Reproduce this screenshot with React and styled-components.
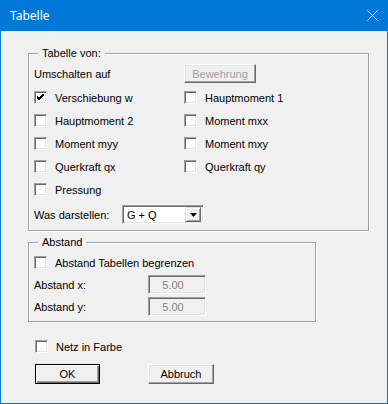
import React from 'react';
import styled, { createGlobalStyle } from 'styled-components';

const GlobalStyle = createGlobalStyle`
  html, body {
    margin: 0;
    padding: 0;
    background: #f0f0f0;
  }
  body {
    font-family: 'Liberation Sans', Arial, sans-serif;
    font-size: 11px;
    color: #000;
  }
`;

const Window = styled.div`
  width: 388px;
  height: 404px;
  box-sizing: border-box;
  border: 1px solid #0078d7;
  border-top: 0;
  background: #f0f0f0;
  display: flex;
  flex-direction: column;
`;

const TitleBar = styled.div`
  height: 31px;
  flex: none;
  margin: 0 -1px;
  background: #0078d7;
  color: #fff;
  display: flex;
  align-items: center;
  justify-content: space-between;
  padding: 0 10px 0 10px;
  font-family: 'Noto Sans', 'Open Sans', sans-serif;
  font-size: 12px;
`;

const Body = styled.div`
  display: flex;
  flex-direction: column;
  padding: 16px 0 0 27px;
`;

const Group = styled.fieldset`
  margin: ${(p) => p.$mt || 0}px 0 0 0;
  padding: 0 5px ${(p) => p.$pb || 6}px 5px;
  width: ${(p) => p.$w}px;
  box-sizing: border-box;
  border: 1px solid #a0a0a0;
  box-shadow: inset 1px 1px 0 #fff, 1px 1px 0 #fff;
  min-width: 0;
`;

const Legend = styled.legend`
  margin-left: 4px;
  padding: 0 4px;
  line-height: 13px;
  height: 13px;
  font-size: 11px;
`;

const Grid = styled.div`
  display: grid;
  grid-template-columns: 150px 1fr;
  padding-top: 4px;
`;

const Row = styled.div`
  display: flex;
  align-items: center;
  height: ${(p) => p.$h || 23}px;
  margin-top: ${(p) => p.$mt || 0}px;
  grid-column: ${(p) => (p.$span ? '1 / -1' : 'auto')};
`;

const Label = styled.span`
  width: ${(p) => (p.$w ? `${p.$w}px` : 'auto')};
  flex: none;
  white-space: nowrap;
`;

const Box = styled.span`
  width: 13px;
  height: 13px;
  box-sizing: border-box;
  flex: none;
  background: #fff;
  border: 1px solid;
  border-color: #a0a0a0 #fff #fff #a0a0a0;
  box-shadow: inset 1px 1px 0 #696969, inset -1px -1px 0 #e3e3e3;
  display: flex;
  align-items: center;
  justify-content: center;
  margin-right: 8px;
`;

const Button = styled.button`
  width: ${(p) => p.$w}px;
  height: ${(p) => p.$h || 19}px;
  box-sizing: border-box;
  padding: 0;
  font-family: inherit;
  font-size: 11px;
  background: #f0f0f0;
  color: ${(p) => (p.disabled ? '#a0a0a0' : '#000')};
  border: 1px solid;
  border-color: ${(p) => (p.$default ? '#000' : '#fff #696969 #696969 #fff')};
  box-shadow: ${(p) =>
    p.$default
      ? 'inset 1px 1px 0 #fff, inset -1px -1px 0 #696969, inset -2px -2px 0 #a0a0a0'
      : 'inset -1px -1px 0 #a0a0a0, inset 1px 1px 0 #e3e3e3'};
`;

const Sunken = styled.div`
  height: 19px;
  width: ${(p) => p.$w}px;
  box-sizing: border-box;
  border: 1px solid;
  border-color: #a0a0a0 #fff #fff #a0a0a0;
  box-shadow: inset 1px 1px 0 #696969, inset -1px -1px 0 #e3e3e3;
  background: ${(p) => (p.$disabled ? '#f0f0f0' : '#fff')};
  color: ${(p) => (p.$disabled ? '#808080' : '#000')};
  display: flex;
  align-items: center;
`;

const InputText = styled.span`
  flex: 1;
  text-align: center;
  padding-right: 8px;
`;

const ComboText = styled.span`
  flex: 1;
  padding-left: 4px;
`;

const ArrowBtn = styled.span`
  width: 16px;
  height: 15px;
  margin-right: 2px;
  box-sizing: border-box;
  background: #f0f0f0;
  border: 1px solid;
  border-color: #e3e3e3 #696969 #696969 #e3e3e3;
  box-shadow: inset 1px 1px 0 #fff, inset -1px -1px 0 #a0a0a0;
  display: flex;
  align-items: center;
  justify-content: center;
`;

const Footer = styled.div`
  display: flex;
  flex-direction: column;
  padding-left: 7px;
`;

const ButtonRow = styled.div`
  display: flex;
  gap: 48px;
  margin-top: 6px;
`;

const Check = ({ label, checked }) => (
  <>
    <Box>
      {checked && (
        <svg width="7" height="7" viewBox="0 0 7 7">
          <path d="M0 3 L2 5 L7 0 M0 4 L2 6 L7 1 M0 2 L2 4 L7 -1" stroke="#000" strokeWidth="1" fill="none" />
        </svg>
      )}
    </Box>
    <Label>{label}</Label>
  </>
);

const CheckRow = ({ label, checked, ...rest }) => (
  <Row {...rest}>
    <Check label={label} checked={checked} />
  </Row>
);

export default function App() {
  return (
    <Window>
      <GlobalStyle />
      <TitleBar>
        <span>Tabelle</span>
        <svg width="11" height="11" viewBox="0 0 11 11">
          <path d="M0.5 0.5 L10.5 10.5 M10.5 0.5 L0.5 10.5" stroke="#fff" strokeWidth="1" />
        </svg>
      </TitleBar>
      <Body>
        <Group $w={341}>
          <Legend>Tabelle von:</Legend>
          <Grid>
            <Row $h={19}>
              <Label>Umschalten auf</Label>
            </Row>
            <Row $h={19}>
              <Button $w={72} disabled>
                Bewehrung
              </Button>
            </Row>
            <CheckRow $mt={3} label="Verschiebung w" checked />
            <CheckRow $mt={3} label="Hauptmoment 1" />
            <CheckRow label="Hauptmoment 2" />
            <CheckRow label="Moment mxx" />
            <CheckRow label="Moment myy" />
            <CheckRow label="Moment mxy" />
            <CheckRow label="Querkraft qx" />
            <CheckRow label="Querkraft qy" />
            <CheckRow $span label="Pressung" />
            <Row $span $h={19} $mt={4}>
              <Label $w={88}>Was darstellen:</Label>
              <Sunken $w={82}>
                <ComboText>G + Q</ComboText>
                <ArrowBtn>
                  <svg width="7" height="4" viewBox="0 0 7 4">
                    <path d="M0 0 H7 L3.5 4 Z" fill="#000" />
                  </svg>
                </ArrowBtn>
              </Sunken>
            </Row>
          </Grid>
        </Group>
        <Group $w={288} $mt={5} $pb={5}>
          <Legend>Abstand</Legend>
          <Grid>
            <CheckRow $span $mt={-2} label="Abstand Tabellen begrenzen" />
            <Row $span $h={19} $mt={1}>
              <Label $w={114}>Abstand x:</Label>
              <Sunken $w={58} $disabled>
                <InputText>5.00</InputText>
              </Sunken>
            </Row>
            <Row $span $h={19} $mt={3}>
              <Label $w={114}>Abstand y:</Label>
              <Sunken $w={58} $disabled>
                <InputText>5.00</InputText>
              </Sunken>
            </Row>
          </Grid>
        </Group>
        <Footer>
          <CheckRow $mt={13} label="Netz in Farbe" />
          <ButtonRow>
            <Button $w={65} $h={20} $default>
              OK
            </Button>
            <Button $w={66} $h={20}>
              Abbruch
            </Button>
          </ButtonRow>
        </Footer>
      </Body>
    </Window>
  );
}
